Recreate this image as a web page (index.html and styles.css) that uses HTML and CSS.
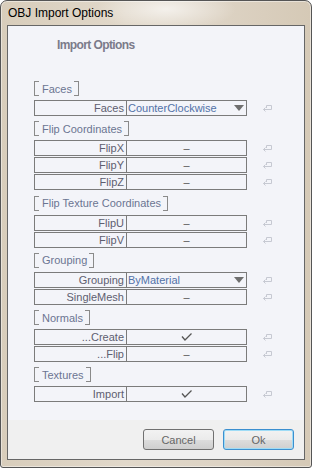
FILE: index.html
```html
<!DOCTYPE html>
<html lang="en">
<head>
  <meta charset="UTF-8" />
  <title>OBJ Import Options</title>
  <link rel="stylesheet" href="styles.css">
</head>
<body>
  <div class="window">
    <div class="titlebar">OBJ Import Options</div>

    <div class="client">
      <div class="panel">
        <h1 class="heading">Import Options</h1>

        <div class="group">
          <div class="group-title">Faces</div>
          <div class="prop">
            <div class="field">
              <span class="label">Faces</span>
              <span class="value combo">CounterClockwise<i class="arrow"></i></span>
            </div>
            <svg class="reset" viewBox="0 0 9 8"><path d="M3.5 4V1.5h5v4h-8M2.5 3.5l-2 2 2 2"/></svg>
          </div>
        </div>

        <div class="group">
          <div class="group-title">Flip Coordinates</div>
          <div class="prop">
            <div class="field">
              <span class="label">FlipX</span>
              <span class="value">–</span>
            </div>
            <svg class="reset" viewBox="0 0 9 8"><path d="M3.5 4V1.5h5v4h-8M2.5 3.5l-2 2 2 2"/></svg>
          </div>
          <div class="prop">
            <div class="field">
              <span class="label">FlipY</span>
              <span class="value">–</span>
            </div>
            <svg class="reset" viewBox="0 0 9 8"><path d="M3.5 4V1.5h5v4h-8M2.5 3.5l-2 2 2 2"/></svg>
          </div>
          <div class="prop">
            <div class="field">
              <span class="label">FlipZ</span>
              <span class="value">–</span>
            </div>
            <svg class="reset" viewBox="0 0 9 8"><path d="M3.5 4V1.5h5v4h-8M2.5 3.5l-2 2 2 2"/></svg>
          </div>
        </div>

        <div class="group">
          <div class="group-title">Flip Texture Coordinates</div>
          <div class="prop">
            <div class="field">
              <span class="label">FlipU</span>
              <span class="value">–</span>
            </div>
            <svg class="reset" viewBox="0 0 9 8"><path d="M3.5 4V1.5h5v4h-8M2.5 3.5l-2 2 2 2"/></svg>
          </div>
          <div class="prop">
            <div class="field">
              <span class="label">FlipV</span>
              <span class="value">–</span>
            </div>
            <svg class="reset" viewBox="0 0 9 8"><path d="M3.5 4V1.5h5v4h-8M2.5 3.5l-2 2 2 2"/></svg>
          </div>
        </div>

        <div class="group">
          <div class="group-title">Grouping</div>
          <div class="prop">
            <div class="field">
              <span class="label">Grouping</span>
              <span class="value combo">ByMaterial<i class="arrow"></i></span>
            </div>
            <svg class="reset" viewBox="0 0 9 8"><path d="M3.5 4V1.5h5v4h-8M2.5 3.5l-2 2 2 2"/></svg>
          </div>
          <div class="prop">
            <div class="field">
              <span class="label">SingleMesh</span>
              <span class="value">–</span>
            </div>
            <svg class="reset" viewBox="0 0 9 8"><path d="M3.5 4V1.5h5v4h-8M2.5 3.5l-2 2 2 2"/></svg>
          </div>
        </div>

        <div class="group">
          <div class="group-title">Normals</div>
          <div class="prop">
            <div class="field">
              <span class="label">...Create</span>
              <span class="value"><svg class="check" viewBox="0 0 11 8"><path d="M1 3.5l3 3.5 6.5-6.5"/></svg></span>
            </div>
            <svg class="reset" viewBox="0 0 9 8"><path d="M3.5 4V1.5h5v4h-8M2.5 3.5l-2 2 2 2"/></svg>
          </div>
          <div class="prop">
            <div class="field">
              <span class="label">...Flip</span>
              <span class="value">–</span>
            </div>
            <svg class="reset" viewBox="0 0 9 8"><path d="M3.5 4V1.5h5v4h-8M2.5 3.5l-2 2 2 2"/></svg>
          </div>
        </div>

        <div class="group">
          <div class="group-title">Textures</div>
          <div class="prop">
            <div class="field">
              <span class="label">Import</span>
              <span class="value"><svg class="check" viewBox="0 0 11 8"><path d="M1 3.5l3 3.5 6.5-6.5"/></svg></span>
            </div>
            <svg class="reset" viewBox="0 0 9 8"><path d="M3.5 4V1.5h5v4h-8M2.5 3.5l-2 2 2 2"/></svg>
          </div>
        </div>
      </div>

      <div class="buttons">
        <button class="btn">Cancel</button>
        <button class="btn btn-default">Ok</button>
      </div>
    </div>
  </div>
</body>
</html>
```

FILE: styles.css
```css
* {
  box-sizing: border-box;
}

body {
  margin: 0;
  background-color: #fff;
  font-family: 'Liberation Sans', Arial, sans-serif;
}

.window {
  width: 312px;
  height: 468px;
  display: flex;
  flex-direction: column;
  border: 1px solid #555;
  border-radius: 7px 7px 3px 3px;
  background:
    radial-gradient(ellipse 70px 22px at 165px 8px, rgba(255, 255, 255, 0.65), rgba(255, 255, 255, 0)),
    linear-gradient(90deg, #d8cdbb, #e1d8ca 40%, #ddd3c4 70%, #d5c9b6);
  box-shadow: inset 0 0 0 1px rgba(255, 255, 255, 0.45);
}

.titlebar {
  height: 24px;
  padding-left: 7px;
  line-height: 24px;
  font-size: 12px;
  color: #000;
}

.client {
  flex: 1;
  display: flex;
  flex-direction: column;
  margin: 0 6px 7px;
  border: 1px solid #666;
}

.panel {
  flex: 1;
  background-color: #f3f4f9;
  padding: 12px 0 0 26px;
}

.heading {
  margin: 0 0 28px 23px;
  font-size: 12px;
  line-height: 15px;
  font-weight: bold;
  letter-spacing: -0.6px;
  color: #7b7b8a;
}

.group {
  margin-bottom: 5.3px;
}

.group-title {
  display: inline-flex;
  height: 15px;
  margin-bottom: 3.5px;
  align-items: center;
  font-size: 11px;
  color: #6b7592;
}

.group-title::before,
.group-title::after {
  content: "";
  align-self: stretch;
  width: 4px;
  border: 1px solid #8a8a8a;
}

.group-title::before {
  border-right: none;
  margin-right: 3px;
}

.group-title::after {
  border-left: none;
  margin-left: 2px;
}

.prop {
  display: flex;
  align-items: center;
  margin-bottom: 1px;
}

.field {
  display: flex;
  width: 213px;
  height: 16px;
  border: 1px solid #7b7b7b;
  font-size: 11px;
  line-height: 14px;
}

.label {
  width: 92px;
  padding-right: 2px;
  border-right: 1px solid #7b7b7b;
  text-align: right;
  color: #5e5e70;
}

.value {
  flex: 1;
  display: flex;
  align-items: center;
  justify-content: center;
  color: #555;
}

.value.combo {
  justify-content: space-between;
  padding: 0 2px 0 1px;
  color: #5272a8;
}

.arrow {
  width: 0;
  height: 0;
  border-left: 5px solid transparent;
  border-right: 5px solid transparent;
  border-top: 6px solid #6f6f6f;
}

.check {
  width: 11px;
  height: 8px;
  fill: none;
  stroke: #555;
  stroke-width: 1.3;
}

.reset {
  width: 9px;
  height: 8px;
  margin-left: 16px;
  fill: none;
  stroke: #c6c9d2;
  stroke-width: 1;
}

.buttons {
  height: 39px;
  display: flex;
  justify-content: flex-end;
  gap: 9px;
  padding: 9px 10px 0 0;
  background-color: #f0f0f0;
}

.btn {
  width: 71px;
  height: 21px;
  border: 1px solid #707070;
  border-radius: 3px;
  background: linear-gradient(#f2f2f2, #ebebeb 50%, #dddddd 51%, #cfcfcf);
  font-family: 'Liberation Sans', Arial, sans-serif;
  font-size: 11px;
  color: #666;
  padding: 0;
}

.btn-default {
  border-color: #3c8fcf;
  box-shadow: inset 0 0 0 1px #9fdcf6;
}
```
